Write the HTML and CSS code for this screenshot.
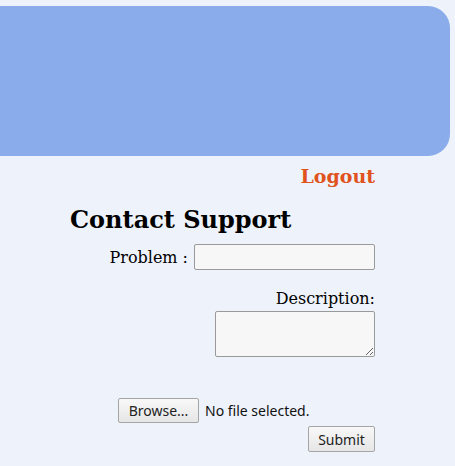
FILE: index.html
```html
<!DOCTYPE html>
<html>
<head>
<meta charset="utf-8">
<link rel="stylesheet" href="styles.css">
</head>
<body>
<div class="header"></div>
<div class="main">
  <div class="logout-row"><a class="logout" href="#">Logout</a></div>
  <h2 class="title">Contact Support</h2>
  <form class="form">
    <div class="row problem-row">
      <label class="label" for="problem">Problem :</label>
      <input class="text-input" id="problem" type="text">
    </div>
    <div class="row desc-label-row">
      <label class="label" for="desc">Description:</label>
    </div>
    <div class="row desc-row">
      <textarea class="textarea" id="desc"></textarea>
    </div>
    <div class="row file-row">
      <span class="btn browse">Browse...</span>
      <span class="file-status">No file selected.</span>
    </div>
    <div class="row submit-row">
      <button class="btn submit" type="button">Submit</button>
    </div>
  </form>
</div>
</body>
</html>
```
FILE: styles.css
```css
html, body {
  margin: 0;
  padding: 0;
  background: #eef2fb;
}
body {
  font-family: "DejaVu Serif", serif;
  color: #000;
  padding-top: 6px;
}
.header {
  width: 450px;
  height: 150px;
  background: #8aacea;
  border-radius: 0 22px 22px 0;
}
.main {
  margin-left: 70px;
  width: 305px;
  display: flex;
  flex-direction: column;
}
.logout-row {
  display: flex;
  justify-content: flex-end;
  margin-top: 8px;
  height: 24px;
}
.logout {
  color: #e0531e;
  font-weight: bold;
  font-size: 19px;
  text-decoration: none;
  line-height: 24px;
}
.title {
  margin: 18px 0 0 0;
  font-size: 24px;
  line-height: 28px;
  font-weight: bold;
}
.form {
  display: flex;
  flex-direction: column;
  align-items: flex-end;
}
.row {
  display: flex;
  align-items: center;
  justify-content: flex-end;
}
.label {
  font-size: 16px;
}
.problem-row {
  margin-top: 10px;
  gap: 6px;
}
.text-input {
  box-sizing: border-box;
  width: 181px;
  height: 26px;
  margin: 0;
  border: 1px solid #9a9a9a;
  border-radius: 2px;
  background: #f7f7f7;
}
.desc-label-row {
  margin-top: 18px;
  height: 20px;
}
.desc-row {
  margin-top: 3px;
}
.textarea {
  box-sizing: border-box;
  width: 160px;
  height: 46px;
  margin: 0;
  border: 1px solid #9a9a9a;
  border-radius: 2px;
  background: #f7f7f7;
  resize: both;
  display: block;
}
.file-row {
  margin-top: 41px;
  width: 257px;
  justify-content: flex-start;
  align-self: flex-start;
  margin-left: 48px;
  gap: 6px;
}
.btn {
  box-sizing: border-box;
  display: inline-flex;
  align-items: center;
  justify-content: center;
  height: 25px;
  padding: 0 8px;
  border: 1px solid #a5a5a5;
  border-radius: 2px;
  background: linear-gradient(#f8f8f8, #e6e6e6);
  font-family: "Noto Sans", sans-serif;
  font-size: 14px;
  color: #222;
}
.browse {
  width: 81px;
}
.file-status {
  font-family: "Noto Sans", sans-serif;
  font-size: 14px;
  color: #111;
}
.submit-row {
  margin-top: 3px;
}
.submit {
  width: 67px;
  height: 26px;
}
```
